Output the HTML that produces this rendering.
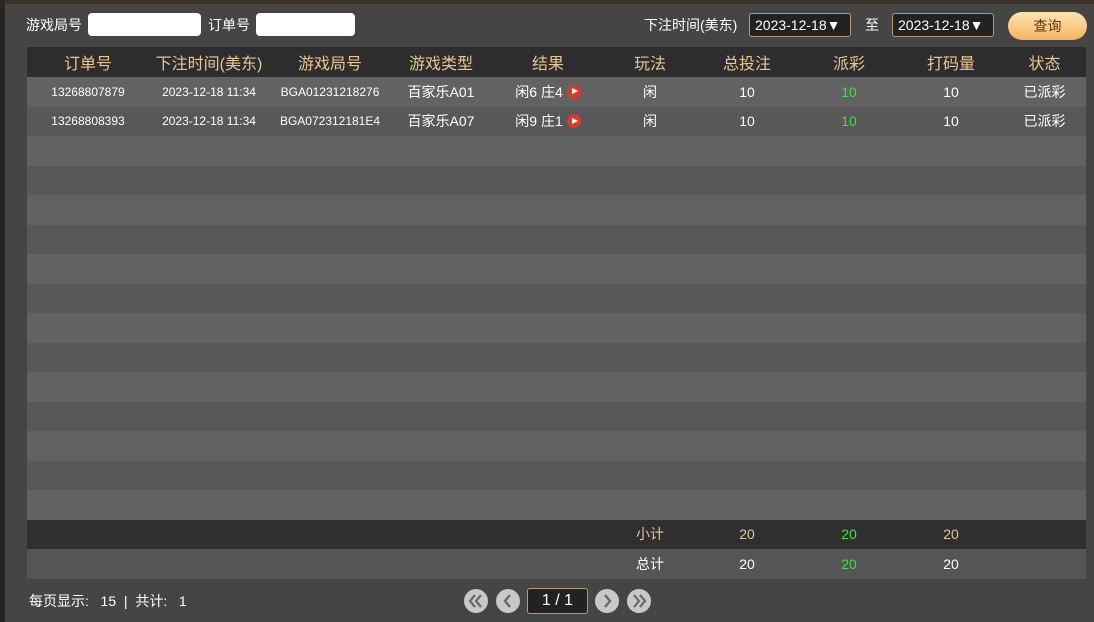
<!DOCTYPE html><html><head><meta charset="utf-8"><style>
*{margin:0;padding:0;box-sizing:border-box}
body{width:1094px;height:622px;background:#454545;font-family:"Liberation Sans","Noto Sans CJK SC",sans-serif;color:#fff;position:relative;overflow:hidden}
.lb{position:absolute;left:0;top:0;width:5px;height:622px;background:#2a2520}
.tb{position:absolute;left:0;top:0;width:1094px;height:4px;background:#3a3128}
.t{position:absolute;font-size:14px;white-space:nowrap}
.inp{position:absolute;background:#fff;border-radius:4px;height:23px;top:13px}
.sel{position:absolute;top:13px;height:24px;background:#222;border:1px solid #b89a6a;border-radius:3px;font-size:14px;line-height:22px;padding-left:5px}
.btn{position:absolute;left:1008px;top:12px;width:79px;height:28px;border-radius:14px;background:linear-gradient(#fde3b0,#f3b560);color:#5a3a10;font-size:14px;text-align:center;line-height:28px}
table{position:absolute;left:27px;top:47px;width:1059px;border-collapse:collapse;table-layout:fixed}
td{text-align:center;font-size:14px;height:29.5px;padding:0}
tr.h td{background:#2d2d2d;color:#e8c690;font-size:16px;height:30px}
tr.a td{background:#626262}
tr.b td{background:#585858}
tr.s td{background:#2f2f2f;color:#e8c690;height:29px}
tr.tt td{background:#555;height:30px}
.sm{font-size:12px}
td.g,tr.s td.g{color:#3de03d}
.ic{display:inline-block;width:14px;height:14px;border-radius:50%;background:#d93a2a;vertical-align:-2px;position:relative;margin-left:4px}
.ic:after{content:"";position:absolute;left:5px;top:3.5px;border-left:6px solid #fff;border-top:3.5px solid transparent;border-bottom:3.5px solid transparent}
.pb{position:absolute;top:589px;width:24px;height:24px;border-radius:50%;background:#c8c8c8}
.pb svg{position:absolute;left:0;top:0}
</style></head><body>
<div class="tb"></div><div class="lb"></div>
<div class="t" style="left:26px;top:15px">游戏局号</div>
<div class="inp" style="left:88px;width:113px"></div>
<div class="t" style="left:208px;top:15px">订单号</div>
<div class="inp" style="left:256px;width:99px"></div>
<div class="t" style="left:644px;top:15px">下注时间(美东)</div>
<div class="sel" style="left:749px;width:102px">2023-12-18▼</div>
<div class="t" style="left:865px;top:15px">至</div>
<div class="sel" style="left:892px;width:102px">2023-12-18▼</div>
<div class="btn">查询</div>
<table>
<colgroup><col style="width:122px"><col style="width:120px"><col style="width:122px"><col style="width:100px"><col style="width:114px"><col style="width:90px"><col style="width:104px"><col style="width:100px"><col style="width:104px"><col style="width:83px"></colgroup>
<tr class="h"><td>订单号</td><td>下注时间(美东)</td><td>游戏局号</td><td>游戏类型</td><td>结果</td><td>玩法</td><td>总投注</td><td>派彩</td><td>打码量</td><td>状态</td></tr>
<tr class="a"><td class="sm">13268807879</td><td class="sm">2023-12-18 11:34</td><td class="sm">BGA01231218276</td><td>百家乐A01</td><td>闲6 庄4<span class="ic"></span></td><td>闲</td><td>10</td><td class="g">10</td><td>10</td><td>已派彩</td></tr>
<tr class="b"><td class="sm">13268808393</td><td class="sm">2023-12-18 11:34</td><td class="sm">BGA072312181E4</td><td>百家乐A07</td><td>闲9 庄1<span class="ic"></span></td><td>闲</td><td>10</td><td class="g">10</td><td>10</td><td>已派彩</td></tr>
<tr class="a"><td colspan="10"></td></tr><tr class="b"><td colspan="10"></td></tr>
<tr class="a"><td colspan="10"></td></tr><tr class="b"><td colspan="10"></td></tr>
<tr class="a"><td colspan="10"></td></tr><tr class="b"><td colspan="10"></td></tr>
<tr class="a"><td colspan="10"></td></tr><tr class="b"><td colspan="10"></td></tr>
<tr class="a"><td colspan="10"></td></tr><tr class="b"><td colspan="10"></td></tr>
<tr class="a"><td colspan="10"></td></tr><tr class="b"><td colspan="10"></td></tr>
<tr class="a"><td colspan="10"></td></tr>
<tr class="s"><td></td><td></td><td></td><td></td><td></td><td>小计</td><td>20</td><td class="g">20</td><td>20</td><td></td></tr>
<tr class="tt"><td></td><td></td><td></td><td></td><td></td><td>总计</td><td>20</td><td class="g">20</td><td>20</td><td></td></tr>
</table>
<div class="t" style="left:29px;top:591px">每页显示:&nbsp;&nbsp; 15 &nbsp;|&nbsp; 共计:&nbsp;&nbsp; 1</div>
<div class="pb" style="left:464px"><svg width="24" height="24"><path d="M11 6L6 12L11 18M17 6L12 12L17 18" fill="none" stroke="#6a6a6a" stroke-width="2.2"/></svg></div>
<div class="pb" style="left:496px"><svg width="24" height="24"><path d="M14 6L9 12L14 18" fill="none" stroke="#6a6a6a" stroke-width="2.4"/></svg></div>
<div style="position:absolute;left:527px;top:588px;width:61px;height:26px;background:#222;border:1px solid #b89a6a;border-radius:3px;font-size:16px;text-align:center;line-height:24px">1 / 1</div>
<div class="pb" style="left:595px"><svg width="24" height="24"><path d="M10 6L15 12L10 18" fill="none" stroke="#6a6a6a" stroke-width="2.4"/></svg></div>
<div class="pb" style="left:627px"><svg width="24" height="24"><path d="M7 6L12 12L7 18M13 6L18 12L13 18" fill="none" stroke="#6a6a6a" stroke-width="2.2"/></svg></div>
</body></html>
